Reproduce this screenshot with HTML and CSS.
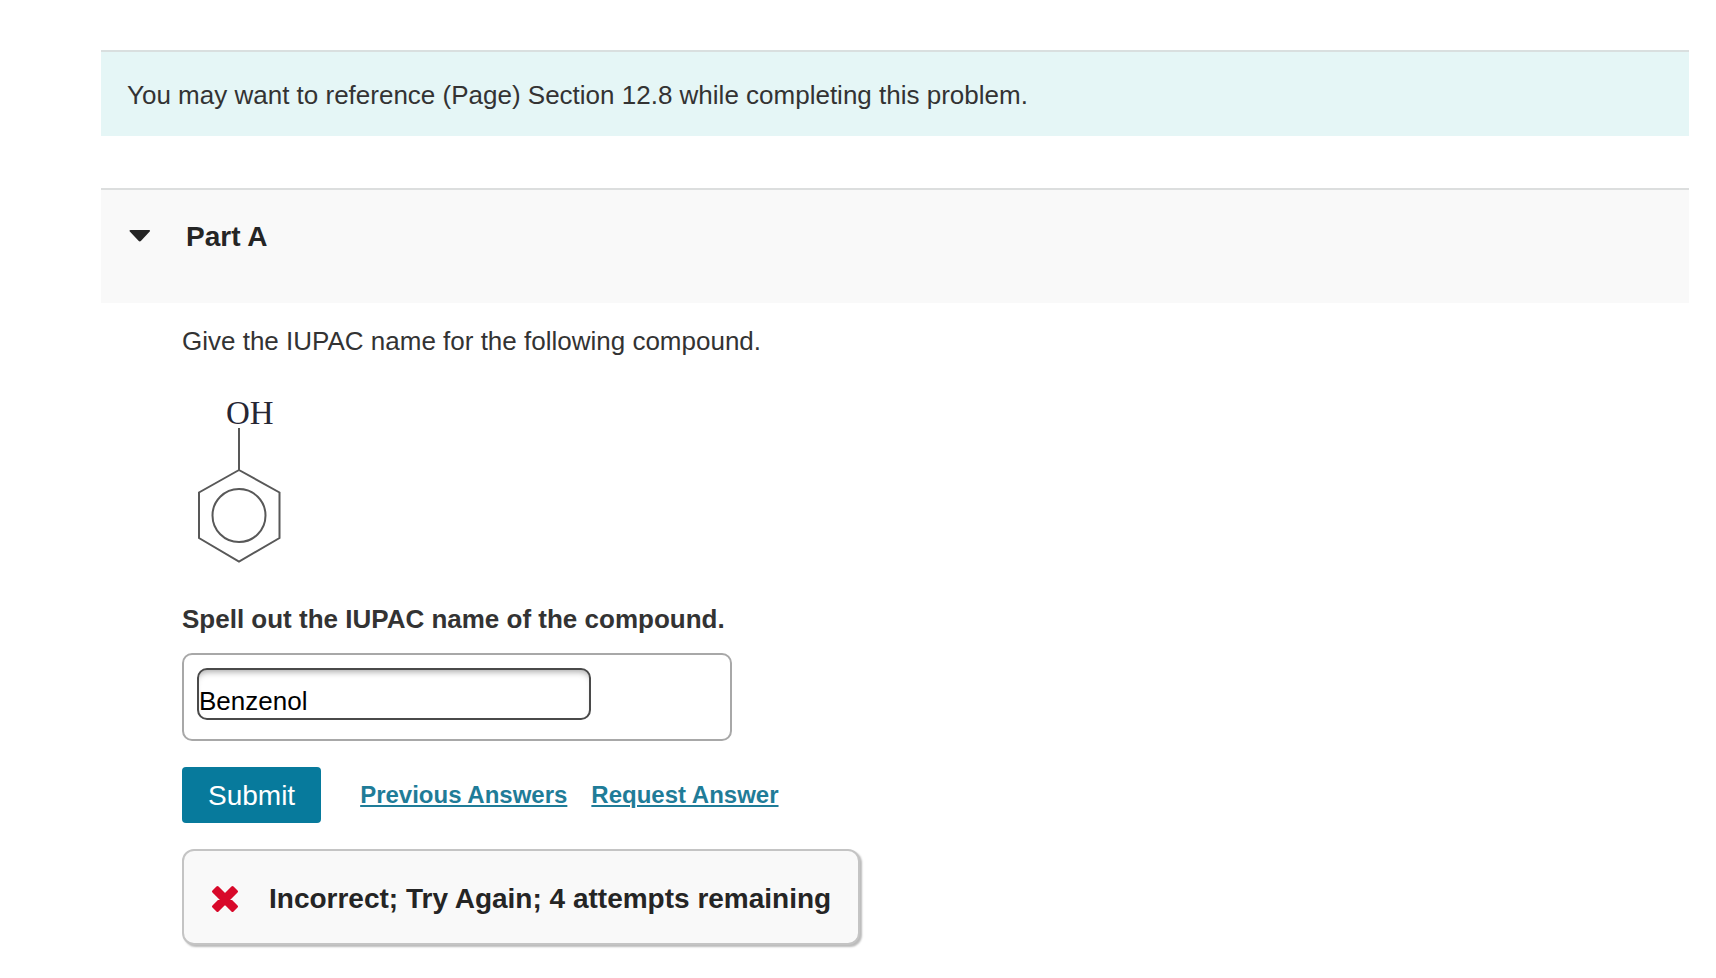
FILE: index.html
```html
<!DOCTYPE html>
<html lang="en">
<head>
<meta charset="utf-8">
<meta name="viewport" content="width=device-width, initial-scale=1">
<title>Part A</title>
<link rel="stylesheet" href="styles.css">
</head>
<body>
<main class="problem">
  <p class="notice">You may want to reference (Page) Section 12.8 while completing this problem.</p>
  <section class="part">
    <header class="part-header">
      <button class="toggle" type="button" aria-label="Collapse Part A" aria-expanded="true">
        <svg width="22" height="14" viewBox="0 0 22 14" aria-hidden="true"><path d="M1.500 1h18.600c1 0 1.300.9.600 1.600l-8.600 9.200c-.8.8-1.800.8-2.600 0L.8 2.600C.2 1.900.5 1 1.500 1z" fill="#252525"/></svg>
      </button>
      <h1 class="part-title">Part A</h1>
    </header>
    <div class="part-body">
      <p class="question">Give the IUPAC name for the following compound.</p>
      <svg class="compound" width="110" height="176" viewBox="0 0 110 176" role="img" aria-label="Benzene ring with an OH group">
        <text class="compound-label" x="44" y="35">OH</text>
        <g fill="none" stroke="#585858" stroke-width="2">
          <path d="M57 39V81L97.500 103.500V149L57 172.500L17 149V103.500L57 81"/>
          <circle cx="57" cy="126.500" r="26.500"/>
        </g>
      </svg>
      <form class="answer">
        <label class="prompt" for="iupac-name">Spell out the IUPAC name of the compound.</label>
        <div class="answer-box">
          <input class="answer-input" id="iupac-name" type="text" value="Benzenol" autocomplete="off" spellcheck="false">
        </div>
        <div class="actions">
          <button class="submit" type="button">Submit</button>
          <a class="action-link" href="#previous">Previous Answers</a>
          <a class="action-link" href="#request">Request Answer</a>
        </div>
      </form>
      <div class="feedback" role="status">
        <svg width="28" height="28" viewBox="0 0 28 28" aria-hidden="true"><path d="M6.500 2.500L14 10L21.500 2.500L25.500 6.500L18 14L25.500 21.500L21.500 25.500L14 18L6.500 25.500L2.500 21.500L10 14L2.500 6.500Z" fill="#d8092a" stroke="#d8092a" stroke-width="3" stroke-linejoin="round"/></svg>
        <strong>Incorrect; Try Again; 4 attempts remaining</strong>
      </div>
    </div>
  </section>
</main>
</body>
</html>
```
FILE: styles.css
```css
* {
  box-sizing: border-box;
}

body {
  margin: 0;
  background: #fff;
  color: #333;
  font-family: "Liberation Sans", Arial, sans-serif;
  font-size: 26px;
  line-height: 30px;
}

.problem {
  padding: 50px 27px 30px 101px;
}

.notice {
  margin: 0 0 52px;
  padding: 28px 26px 26px;
  border-top: 2px solid #d9dfdf;
  background: #e5f6f6;
}

.part-header {
  display: flex;
  align-items: flex-start;
  gap: 35px;
  padding: 31px 28px 50px;
  border-top: 2px solid #dcdede;
  background: #f9f9f9;
}

.toggle {
  display: flex;
  align-items: center;
  height: 30px;
  padding: 0;
  border: 0;
  background: none;
}

.part-title {
  margin: 0;
  color: #252525;
  font-size: 28px;
  line-height: 32px;
}

.part-body {
  padding: 23px 0 0 81px;
}

.question {
  margin: 0 0 33px;
}

.compound {
  display: block;
  margin-bottom: 39px;
}

.compound-label {
  fill: #262634;
  font-family: "Liberation Serif", "Times New Roman", serif;
  font-size: 33px;
}

.prompt {
  display: block;
  margin-bottom: 19px;
  font-weight: bold;
}

.answer-box {
  max-width: 550px;
  padding: 13px;
  border: 2px solid #a8a8a8;
  border-radius: 10px;
}

.answer-input {
  display: block;
  width: 394px;
  max-width: 100%;
  height: 52px;
  margin-bottom: 6px;
  padding: 14px 0 0;
  border: 2px solid #4a4a4a;
  border-radius: 10px;
  background: #fff;
  box-shadow: inset 0 6px 6px -4px #aaa;
  color: #000;
  font: inherit;
}

.actions {
  display: flex;
  flex-wrap: wrap;
  align-items: center;
  gap: 24px;
  margin: 26px 0;
}

.submit {
  margin-right: 15px;
  padding: 13px 26px 11px;
  border: 0;
  border-radius: 4px;
  background: #077a9c;
  color: #fff;
  font: inherit;
  font-size: 28px;
  line-height: 32px;
}

.action-link {
  color: #1f7c98;
  font-size: 24px;
  font-weight: bold;
  text-decoration-thickness: 2px;
  text-underline-offset: 2px;
}

.feedback {
  display: flex;
  align-items: center;
  gap: 30px;
  width: fit-content;
  padding: 31px 27px 27px;
  border: 2px solid #c4c4c4;
  border-radius: 12px;
  background: #f9f9f9;
  box-shadow: 2px 2px 2px #bbb;
  color: #252525;
  font-size: 28px;
  line-height: 34px;
}
```
